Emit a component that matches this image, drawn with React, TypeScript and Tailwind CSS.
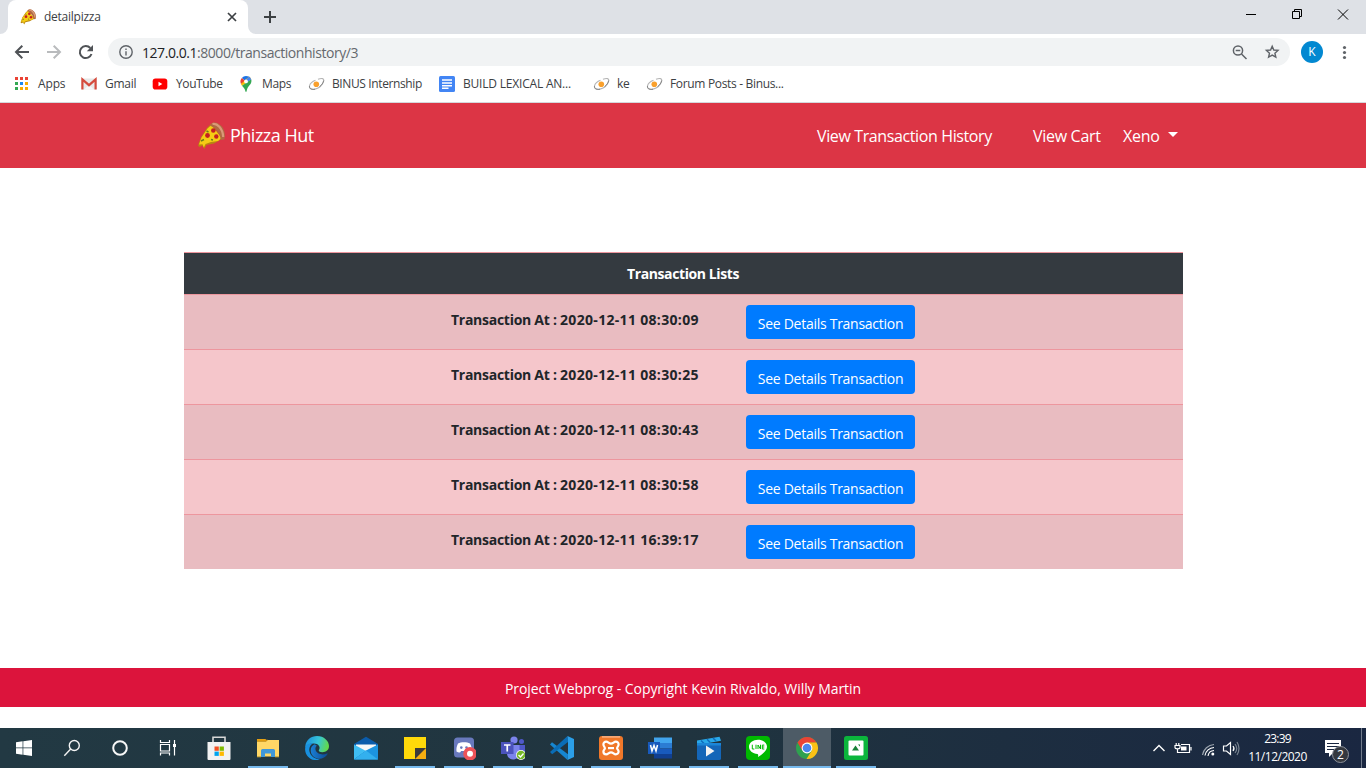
import React from "react";

const Pizza = ({ className }: { className: string }) => (
  <svg viewBox="0 0 28 28" className={className}>
    <path d="M1 23.500 4 15 10 6 14 2 25.500 16.500 17 21.500 9.500 23 7.300 27 5.500 23.500 2.500 25Z" fill="#b9860f" />
    <path d="M2 22.500 4.500 15.500 10.500 6.500 14.500 3 24.500 16 21 19 14 20 8.500 22 6.800 25.500 5.500 22.300Z" fill="#f5cc14" />
    <path d="M13 3.500C14 .3 18-.6 22 2 27 5 29 11.500 27.300 17.500L23.500 18C24 12.500 19 6.500 13 3.500Z" fill="#b06a42" />
    <path d="M15.500 2C20 1 25.700 6 26.200 15" fill="none" stroke="#d99a78" strokeWidth="2.200" />
    <circle cx="16.300" cy="8.500" r="2.300" fill="#c42020" />
    <circle cx="10.500" cy="13.500" r="2.400" fill="#c42020" />
    <circle cx="19.300" cy="14.500" r="2.200" fill="#c42020" />
    <path d="M4 19l3-1.500M9.500 9l2 1M14 17.500l2 .5" stroke="#6b7d1c" strokeWidth="1.400" />
  </svg>
);

const Binus = () => (
  <svg width="17" height="16" viewBox="0 0 17 16">
    <path d="M10 3.300C13.500 2 16.500 2.200 15.600 5.300 14.600 8.800 11 12 7 13.100 3.500 14 .8 12.600 1.500 9.800 2.200 7.200 5 5.200 7.500 4.300" fill="none" stroke="#b5b5b5" strokeWidth="1.100" />
    <path d="M7 13.200C3.800 14 1 12.500 1.500 10M15.700 4.500C15.200 7 13.500 9.200 11.500 10.700" fill="none" stroke="#858585" strokeWidth="1" />
    <circle cx="8.300" cy="8.300" r="2.800" fill="#f9a02c" />
  </svg>
);

const bookmarks = [
  {
    label: "Apps", box: "w-[67px]", text: "pl-[10px] tracking-[-0.15px]",
    icon: (
      <svg width="14" height="14" viewBox="0 0 14 14">
        <path d="M1 0h3v3H1zM6 0h3v3H6zM11 0h3v3h-3z" fill="#ea4335" />
        <path d="M1 5h3v3H1zM1 10h3v3H1z" fill="#34a853" />
        <path d="M6 5h3v3H6z" fill="#1a88f0" />
        <path d="M11 5h3v3h-3zM6 10h3v3H6zM11 10h3v3h-3z" fill="#f9ab00" />
      </svg>
    ),
  },
  {
    label: "Gmail", box: "w-[71px]", text: "pl-[8px] tracking-[-0.25px]",
    icon: (
      <svg width="16" height="14" viewBox="0 0 16 14">
        <rect x=".5" y="1.500" width="15" height="11" rx="1" fill="#e8e8e8" />
        <path d="M3 12.500 8 8 13 12.500Z" fill="#f7f7f7" />
        <path d="M1.400 12.500V2.500L8 8.200 14.600 2.500v10" fill="none" stroke="#d54b3d" strokeWidth="2.200" />
      </svg>
    ),
  },
  {
    label: "YouTube", box: "w-[86px]", text: "pl-[8px] tracking-[-0.4px]",
    icon: (
      <svg width="16" height="12" viewBox="0 0 16 12">
        <rect x=".7" y=".5" width="14.600" height="11" rx="2.800" fill="#f00" />
        <path d="M6.500 3.700v4.600L10.300 6Z" fill="#fff" />
      </svg>
    ),
  },
  {
    label: "Maps", box: "w-[70px]", text: "pl-[8px] tracking-[-0.35px]",
    icon: (
      <svg width="16" height="16" viewBox="0 0 16 16">
        <path d="M8 0a5.500 5.500 0 0 0-4.200 2L8 5.500l3-5C10.100.2 9 0 8 0Z" fill="#1a73e8" />
        <path d="M3.800 2A5.500 5.500 0 0 0 3 7.900L8 5.500Z" fill="#ea4335" />
        <path d="M11 .5a5.500 5.500 0 0 1 2.200 3L4 9.700A8 8 0 0 1 3 7.900Z" fill="#fbbc04" />
        <path d="M13.200 3.300c.9 3.300-.8 5.100-2.500 7C9.300 12 9 13.500 8.600 15.200c-.2.900-1 .9-1.200 0C7 13.200 6 12 4 9.700Z" fill="#34a853" />
        <path d="M11 .5a5.500 5.500 0 0 1 2.200 3L8 6.800 8 4Z" fill="#4285f4" />
        <circle cx="8" cy="5.400" r="1.900" fill="#fff" />
      </svg>
    ),
  },
  { label: "BINUS Internship", box: "w-[131px]", text: "pl-[7px] tracking-[-0.38px]", icon: <Binus /> },
  {
    label: "BUILD LEXICAL AN...", box: "w-[154px]", text: "pl-[8px] tracking-[-0.2px]",
    icon: (
      <svg width="16" height="16" viewBox="0 0 16 16">
        <rect width="16" height="16" rx="1.500" fill="#4285f4" />
        <path d="M3 4h10M3 7h10M3 9.700h10M3 12.300h6.500" stroke="#fff" strokeWidth="1.400" />
      </svg>
    ),
  },
  { label: "ke", box: "w-[53px]", text: "pl-[7px] tracking-[-0.2px]", icon: <Binus /> },
  { label: "Forum Posts - Binus...", box: "w-[150px]", text: "pl-[7px] tracking-[-0.33px]", icon: <Binus /> },
];

const transactions = [
  "2020-12-11 08:30:09",
  "2020-12-11 08:30:25",
  "2020-12-11 08:30:43",
  "2020-12-11 08:30:58",
  "2020-12-11 16:39:17",
];

const systemIcons: React.ReactNode[] = [
  <path key="w" d="M4 6.200 10.600 5.300V11.500H4ZM11.300 5.200 20 4V11.500H11.300ZM4 12.200h6.600v6.500L4 17.800ZM11.300 12.200H20V20l-8.700-1.200Z" fill="#fff" />,
  <g key="s" fill="none" stroke="#f4f4f4" strokeWidth="1.400"><circle cx="14.300" cy="9.500" r="5" /><path d="M10.700 13.100 4.300 19.700" /></g>,
  <circle key="c" cx="12" cy="12" r="6.800" fill="none" stroke="#f7f7f7" strokeWidth="2" />,
  <g key="t" fill="none" stroke="#fff" strokeWidth="1.200"><path d="M4.500 4v2.500h9V4M4.500 19.500V17h9v2.500M4.500 8.500h9v6.500h-9zM18.500 4v15.500" /><path d="M17 8h3v3h-3z" fill="#fff" stroke="none" /></g>,
];

type App = { name: string; open?: boolean; active?: boolean; art: React.ReactNode };

const taskApps: App[] = [
  {
    name: "store",
    art: (
      <>
        <path d="M6 7V1.200h12V7" fill="none" stroke="#d8d8d8" strokeWidth="1.600" />
        <path d="M.5 6h23v17a1 1 0 0 1-1 1h-21a1 1 0 0 1-1-1Z" fill="#f2f2f2" />
        <path d="M7.500 10.500h4.300v4.300H7.500z" fill="#f25022" /><path d="M12.600 10.500h4.300v4.300h-4.300z" fill="#7fba00" />
        <path d="M7.500 15.600h4.300v4.300H7.500z" fill="#00a4ef" /><path d="M12.600 15.600h4.300v4.300h-4.300z" fill="#ffb900" />
      </>
    ),
  },
  {
    name: "explorer", open: true,
    art: (
      <>
        <path d="M1 3h8.500l1.500 2.500H1Z" fill="#e8a317" /><path d="M1 5.500h9L11.500 4H23v16.500H1Z" fill="#ffd766" />
        <path d="M1 5.500h9L12 3.700H1Z" fill="#e09b0e" />
        <path d="M5 21v-6.500a1.500 1.500 0 0 1 1.500-1.500h11a1.500 1.500 0 0 1 1.500 1.500V21h-4v-3.500H9V21Z" fill="#3f97d9" />
        <path d="M1 20.300h4v1H1zM19 20.300h4v1h-4z" fill="#e5b93c" />
      </>
    ),
  },
  {
    name: "edge",
    art: (
      <>
        <defs>
          <linearGradient id="edgeA" x1="0" x2="1" y1=".2" y2=".4"><stop stopColor="#1b8fe0" /><stop offset=".55" stopColor="#36c5d8" /><stop offset="1" stopColor="#62d94a" /></linearGradient>
          <linearGradient id="edgeB" x1="0" x2="1"><stop stopColor="#1a7fd4" /><stop offset="1" stopColor="#0c4a94" /></linearGradient>
        </defs>
        <path d="M.3 10C1 4 6 0 12 0c7 0 12 5 12 10 0 4-3 6.200-6.500 6.200-3 0-4.300-1-3.600-2.200 2-3-.4-6.600-4.900-6.600C5 7.400 1.600 8.500.3 12Z" fill="url(#edgeA)" />
        <path d="M.1 13C.4 9 4 7 8 7.400c-3 1.500-4.300 4.500-3.500 8C5.600 20 10 23.200 15 23.500 8 26 0 21 .1 13Z" fill="#1890df" />
        <path d="M9.700 8.300C6.800 9.500 5 12.500 6 16.500c1.500 5.500 8 8 13 5 1.500-.9 2.800-2 3.600-3.400.3-.5-.1-.9-.7-.6-4.600 2.200-10.300.3-11.300-3.500-.5-2 .2-3.300 1.300-4.200Z" fill="url(#edgeB)" />
      </>
    ),
  },
  {
    name: "mail",
    art: (
      <>
        <path d="M0 10.500V8L12 .8 24 8v4H0Z" fill="#0b5cab" /><path d="M2 8.500h20v7H2z" fill="#f7f7f7" />
        <path d="M0 8.500 12 15l-12 8.500Z" fill="#3fbdf3" /><path d="M24 8.500v15H0L12 14.500Z" fill="#1c94e0" /><path d="M0 23.500 12 14.500 24 23.500Z" fill="#33b0ee" />
      </>
    ),
  },
  {
    name: "notes", open: true,
    art: (<><path d="M1 1h22v22H1z" fill="#ffd90a" /><path d="M12 12h11v11H12z" fill="#f5ad10" /><path d="M12 12h11L12 23Z" fill="#3b3b3b" /></>),
  },
  {
    name: "discord", open: true,
    art: (
      <>
        <rect x="2" y="1.500" width="20" height="20" rx="3.500" fill="#6979bd" />
        <path d="M6 7.500c3-1.700 9-1.700 12 0 1.500 2.500 2 5.500 1.500 8-3 2-4 1-4.500-.5h-6c-.5 1.500-2 2.500-4.500.5-.3-3 .2-5.500 1.500-8Z" fill="#fff" />
        <circle cx="9.300" cy="11.600" r="1.300" fill="#6979bd" /><circle cx="14.500" cy="11.600" r="1.300" fill="#6979bd" />
        <circle cx="18" cy="17.800" r="6.800" fill="#ed5258" /><circle cx="18" cy="17.800" r="3" fill="#fff" />
      </>
    ),
  },
  {
    name: "teams", open: true,
    art: (
      <>
        <circle cx="13" cy="4" r="3.600" fill="#7b83eb" /><circle cx="20.500" cy="5.500" r="2.500" fill="#5059c9" />
        <path d="M16 9h8v8c0 3-2 5-5 5Z" fill="#5059c9" /><path d="M6 9h12.500v8c0 4-3 6.500-6.500 6.500s-6-3-6-6Z" fill="#7b83eb" />
        <path d="M0 6h12.500v12H0z" fill="#4b53bc" /><path d="M3 9h6.500M6.250 9v6.500" stroke="#fff" strokeWidth="1.700" />
        <circle cx="20" cy="19" r="5" fill="#fff" /><circle cx="20" cy="19" r="4.300" fill="#76b729" /><path d="m17.500 19 2 2 3-3.500" fill="none" stroke="#fff" strokeWidth="1.300" />
      </>
    ),
  },
  {
    name: "code", open: true,
    art: (
      <>
        <path d="M17.500 24 0 8.500l2-2.200 16 12Z" fill="#1686d0" /><path d="M17.500 0 18 6 2.200 18.200 0 16Z" fill="#0a6db6" /><path d="M17.500 0 24 3v18l-6.500 3 .5-5V6Z" fill="#2b9fe8" />
      </>
    ),
  },
  {
    name: "xampp", open: true,
    art: (
      <>
        <rect width="24" height="24" rx="3" fill="#f0782a" /><rect x="3" width="18" height="1.800" fill="#f7a774" />
        <path d="M7.200 5.600c2 0 2.600 2 4.800 2s2.800-2 4.800-2a2.800 2.800 0 0 1 2.800 3c0 1.800-1.500 2.200-1.500 3.600s1.500 1.600 1.500 3.400a2.800 2.800 0 0 1-2.800 2.800c-2 0-2.600-2-4.800-2s-2.800 2-4.800 2a2.800 2.800 0 0 1-2.800-2.800c0-1.800 1.500-2 1.500-3.400s-1.500-1.800-1.500-3.600a2.800 2.800 0 0 1 2.800-3Z" fill="none" stroke="#fff" strokeWidth="2.200" />
        <path d="M9 12.100h6" stroke="#fff" strokeWidth="2.200" />
      </>
    ),
  },
  {
    name: "word", open: true,
    art: (
      <>
        <path d="M6 1.500h18V7H6z" fill="#41a5ee" /><path d="M6 7h18v5.500H6z" fill="#2b7cd3" /><path d="M6 12.500h18V18H6z" fill="#185abd" /><path d="M6 18h18v4.500H6z" fill="#103f91" />
        <path d="M0 6h12v12H0z" fill="#185abd" /><path d="m2.500 9 1.500 6 2-5.500 2 5.500L9.500 9" fill="none" stroke="#fff" strokeWidth="1.500" />
      </>
    ),
  },
  {
    name: "films", open: true,
    art: (
      <>
        <path d="M0 4.500 22.500.8l1.500 4L0 9Z" fill="#29a9ea" /><path d="m4 4.500 3 3M10 3.200l3 3M16 2l3 3" stroke="#0f6cbd" strokeWidth="1.500" />
        <path d="M0 7h24v15.500a1.500 1.500 0 0 1-1.500 1.500h-21A1.500 1.500 0 0 1 0 22.500Z" fill="#1466b8" /><path d="M0 7h24v2.500H0z" fill="#1b86d8" />
        <path d="M9 9.500v11l8.500-5.500Z" fill="#f3f3f3" />
      </>
    ),
  },
  {
    name: "line", open: true,
    art: (
      <>
        <rect width="24" height="24" rx="4" fill="#00b900" />
        <path d="M12 3.800c5 0 9 3.100 9 7 0 4.200-5 7.700-9 10.200.3-1.500.5-2.700-.5-3-5-.4-8.500-3.400-8.500-7.200 0-3.900 4-7 9-7Z" fill="#fff" />
        <path d="M6.300 8.700V13h2M10 8.700V13M12 13V9l2.500 4V8.700M18.300 9.100h-2V13h2M16.300 11h2" fill="none" stroke="#00b900" strokeWidth="1" />
      </>
    ),
  },
  {
    name: "chrome", open: true, active: true,
    art: (
      <>
        <circle cx="12" cy="12" r="11" fill="#2fa14f" />
        <path d="M2.500 6.500A11 11 0 0 1 21.500 6.500L12 7 7.200 14.500Z" fill="#ea4335" />
        <path d="M21.500 6.500A11 11 0 0 1 11.500 23L16.800 14.500 12 6.500Z" fill="#fbc116" />
        <circle cx="12" cy="12" r="5.400" fill="#fff" /><circle cx="12" cy="12" r="4.300" fill="#4a86ee" />
      </>
    ),
  },
  {
    name: "share", open: true,
    art: (
      <>
        <rect width="24" height="24" rx="2.500" fill="#0bb53c" /><rect x="4.500" y="4.500" width="15" height="15" rx="1" fill="#fff" />
        <path d="m8 14.500 3.500-5 3.500 5Z" fill="#188038" /><path d="M14 8.500h2v2z" fill="#188038" />
      </>
    ),
  },
];

function Browser() {
  return (
    <header className="flex h-[103px] flex-col border-b border-[#d5d8dc] bg-white text-[#3c4043]">
      <div className="flex h-[34px] bg-[#dee1e6]">
        <svg width="8" height="34"><path d="M8 26v8H0a8 8 0 0 0 8-8Z" fill="#fff" /></svg>
        <div className="flex w-[240px] items-center rounded-t-lg bg-white pl-3 pr-[11px]">
          <Pizza className="size-4" />
          <span className="flex-1 pl-2 text-[12px] tracking-[-0.25px]">detailpizza</span>
          <svg width="10" height="10" viewBox="0 0 10 10"><path d="m1 1 8 8M9 1 1 9" stroke="#3c4043" strokeWidth="1.700" /></svg>
        </div>
        <svg width="8" height="34"><path d="M0 26v8h8a8 8 0 0 1-8-8Z" fill="#fff" /></svg>
        <svg width="28" height="34"><path d="M8 17h12M14 11v12" stroke="#3c4043" strokeWidth="2" /></svg>
        <svg className="ml-auto" width="130" height="34" fill="none" stroke="#000">
          <path d="M10 14.500h10M56.500 11.500h7v7h-7zM58.500 11V9.500h7v7H64M102 9.500l10 10M112 9.500l-10 10" />
        </svg>
      </div>
      <div className="flex h-9 items-center">
        <svg width="108" height="36" viewBox="0 0 108 36" fill="none" strokeWidth="2">
          <path d="M29 18H16.500M22.300 11.700 16 18l6.300 6.300" stroke="#505357" />
          <path d="M47 18h12.500M53.700 11.700 60 18l-6.300 6.300" stroke="#b9bbbd" />
          <path d="M91.500 20a6 6 0 1 1-1.200-6" stroke="#505357" /><path d="M93 11v6.200h-6.200Z" fill="#505357" />
        </svg>
        <div className="flex h-7 w-[1182px] items-center rounded-full bg-[#f1f3f4] pl-[11px] pr-[9px]">
          <svg width="14" height="14" viewBox="0 0 14 14" fill="none" stroke="#5f6368" strokeWidth="1.400"><circle cx="7" cy="7" r="6.200" /><path d="M7 6.200v4.300M7 3.400v1.500" /></svg>
          <span className="flex-1 pl-[9px] text-[14px] tracking-[-0.45px] text-[#65696e]"><span className="text-[#202124]">127.0.0.1</span>:8000/transactionhistory/3</span>
          <svg width="50" height="18" viewBox="0 0 50 18" fill="none" stroke="#5f6368" strokeWidth="1.500">
            <circle cx="7" cy="7.500" r="4.600" /><path d="m10.500 11 5 5M4.700 7.500h4.600" />
            <path d="m41.200 3.200 1.600 3.800 4.200.4-3.100 2.800.9 4-3.600-2.100-3.600 2.100.9-4-3.100-2.800 4.200-.4Z" strokeWidth="1.400" />
          </svg>
        </div>
        <span className="ml-[11px] flex size-[22px] items-center justify-center rounded-full bg-[#0288d1] text-[12px] text-white">K</span>
        <svg className="ml-[18px]" width="6" height="16" fill="#5f6368"><circle cx="3.500" cy="3.500" r="1.600" /><circle cx="3.500" cy="8.500" r="1.600" /><circle cx="3.500" cy="13.500" r="1.600" /></svg>
      </div>
      <nav className="flex h-7 items-center pl-[14px] text-[12px]">
        {bookmarks.map((b) => (
          <div key={b.label} className={`flex shrink-0 items-center whitespace-nowrap ${b.box}`}>
            <span className="shrink-0">{b.icon}</span>
            <span className={b.text}>{b.label}</span>
          </div>
        ))}
      </nav>
    </header>
  );
}

function Taskbar() {
  return (
    <footer className="flex h-10 bg-linear-to-r from-[#223943] via-[#20343f] to-[#1a2741] text-white">
      {systemIcons.map((icon, i) => (
        <div key={i} className="flex w-12 items-center justify-center"><svg width="24" height="24" viewBox="0 0 24 24">{icon}</svg></div>
      ))}
      <div className="ml-[3px] flex gap-px">
        {taskApps.map((a) => (
          <div key={a.name} className={`flex w-12 flex-col items-center justify-between pt-2 ${a.active ? "bg-[#4d5b66]" : ""}`}>
            <svg width="24" height="24" viewBox="0 0 24 24">{a.art}</svg>
            {a.open && <span className={`h-0.5 bg-[#76b9ed] ${a.active ? "w-12" : "w-10"}`} />}
          </div>
        ))}
      </div>
      <svg className="ml-auto" width="92" height="40" fill="none" stroke="#fff" strokeWidth="1.200">
        <path d="m5.500 23 5.500-5.500 5.500 5.500" strokeWidth="1.400" />
        <path d="M33 16.500h8.500v8H31M43 19v3.500" /><path d="M33 18.500h5.500v4H33z" fill="#fff" stroke="none" />
        <path d="M27 17.500h5v2c0 1.800-5 1.800-5 0ZM28.200 15v2M30.800 15v2M29.500 21v3.500h2" />
        <g stroke="#9ba4ae"><path d="M54.500 27A12.500 12.500 0 0 1 66 16.500" /></g><path d="M57 27.500a9.500 9.500 0 0 1 9-8M60 27.800a6.500 6.500 0 0 1 6-5.300" /><circle cx="64.800" cy="26" r="1.500" fill="#fff" stroke="none" />
        <path d="M75.500 18h3l4-3.500v12l-4-3.500h-3ZM85 18q2 2.500 0 5" /><g stroke="#77828f"><path d="M87 16q3.500 4.500 0 9M89 14q4 6.500 0 13" /></g>
      </svg>
      <div className="flex w-[76px] flex-col items-center pr-px pt-0.5 text-[12px] leading-[18px]">
        <span className="tracking-[-0.8px]">23:39</span>
        <span className="tracking-[-0.5px]">11/12/2020</span>
      </div>
      <div className="relative ml-2 mr-[9px] w-7">
        <svg width="28" height="40"><path d="M1 12h16v13H9l-4 4v-4H1Z" fill="#fff" /><path d="M3 15.500h12M3 18.500h12M3 21.500h8" stroke="#1a2741" /></svg>
        <span className="absolute left-2 top-[18px] flex size-[17px] items-center justify-center rounded-full border border-[#8d929b] bg-[#34383f] text-[12px] leading-none">2</span>
      </div>
      <div className="w-[5px] border-l border-[#717b8b]" />
    </footer>
  );
}

export default function App() {
  return (
    <div className="flex h-[768px] w-[1366px] flex-col overflow-hidden bg-white font-['Open_Sans','Noto_Sans',sans-serif]">
      <Browser />
      <div className="flex h-[65px] items-center bg-[#dc3545] px-[197px] text-white">
        <Pizza className="size-7" />
        <span className="pl-[5px] text-[18px] tracking-[-0.5px]">Phizza Hut</span>
        <div className="ml-auto flex items-center whitespace-nowrap text-[16px]">
          <span className="w-[215px] tracking-[-0.38px]">View Transaction History</span>
          <span className="w-[91px] pl-px tracking-[-0.3px]">View Cart</span>
          <span className="w-[45px] tracking-[-0.3px]">Xeno</span>
          <svg className="-mr-[9px] mb-0.5" width="10" height="5"><path d="M0 0h10L5 5Z" fill="#fff" /></svg>
        </div>
      </div>
      <main className="flex flex-1 flex-col pl-[184px] pr-[183px] pt-[84px] text-[14px]">
        <div className="flex h-[42px] items-center justify-center border-t border-[#ed969e] bg-[#343a40] pr-px font-bold text-white">
          <span className="tracking-[-0.4px]">Transaction Lists</span>
        </div>
        {transactions.map((t) => (
          <div key={t} className="flex h-[55px] border-t border-[#ed969e] pl-[267px] pt-[10px] odd:bg-[#f5c6cb] even:bg-[#e9bcc1]">
            <div className="w-[295px] whitespace-nowrap pt-1 font-bold leading-[21px] text-[#212529]">
              <span className="tracking-[-0.27px]">Transaction At : </span>
              <span className="tracking-[0.32px]">{t}</span>
            </div>
            <button className="h-[34px] w-[169px] whitespace-nowrap rounded-[4px] bg-[#007bff] pt-0.5 text-[14px] tracking-[-0.27px] text-white">See Details Transaction</button>
          </div>
        ))}
      </main>
      <div className="mb-[21px] flex h-[39px] items-center justify-center bg-[#dc143c] pt-px text-[14px] tracking-[-0.05px] text-white">
        Project Webprog - Copyright Kevin Rivaldo, Willy Martin
      </div>
      <Taskbar />
    </div>
  );
}
